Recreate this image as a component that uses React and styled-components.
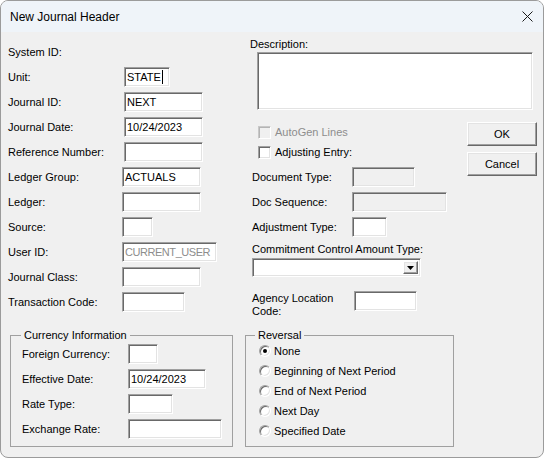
import React from "react";
import styled, { createGlobalStyle } from "styled-components";

const GlobalStyle = createGlobalStyle`
  html, body {
    margin: 0;
    padding: 0;
    background: #ffffff;
  }
  body {
    font-family: "Liberation Sans", Arial, sans-serif;
    font-size: 11px;
    color: #000;
  }
`;

const Window = styled.div`
  width: 544px;
  height: 458px;
  box-sizing: border-box;
  border: 1px solid #9b9b9b;
  border-radius: 8px;
  background: #f0f0f0;
  overflow: hidden;
  display: flex;
  flex-direction: column;
`;

const TitleBar = styled.div`
  height: 31px;
  flex: none;
  display: flex;
  align-items: center;
  justify-content: space-between;
  padding: 0 10px 0 9px;
  background: #eff4f9;
  font-size: 12px;
`;

const Body = styled.div`
  padding: 5px 6px 0 7px;
`;

const Top = styled.div`
  display: flex;
`;

const LeftCol = styled.div`
  width: 242px;
  padding-top: 2px;
`;

const Row = styled.div`
  height: ${(p) => p.$h || 25}px;
  display: flex;
  align-items: center;
`;

const Label = styled.span`
  width: ${(p) => p.$w}px;
  flex: none;
  white-space: nowrap;
  color: ${(p) => (p.$disabled ? "#8d8d8d" : "#000")};
`;

const sunken = `
  box-sizing: border-box;
  border: 1px solid;
  border-color: #a0a0a0 #ffffff #ffffff #a0a0a0;
  box-shadow: inset 1px 1px 0 #696969, inset -1px -1px 0 #e3e3e3;
`;

const raised = `
  box-sizing: border-box;
  border: 1px solid;
  border-color: #ffffff #696969 #696969 #ffffff;
  box-shadow: inset -1px -1px 0 #a0a0a0, inset 1px 1px 0 #e3e3e3;
`;

const Field = styled.div`
  ${sunken}
  flex: none;
  width: ${(p) => p.$w}px;
  height: ${(p) => p.$h || 20}px;
  margin-left: ${(p) => p.$ml || 0}px;
  padding: 0 2px;
  display: flex;
  align-items: center;
  overflow: hidden;
  white-space: nowrap;
  background: ${(p) => (p.$disabled ? "#f0f0f0" : "#ffffff")};
  color: ${(p) => (p.$gray ? "#8d8d8d" : "#000")};
  letter-spacing: ${(p) => (p.$gray ? "-0.45px" : "normal")};
`;

const Caret = styled.span`
  display: inline-block;
  width: 1px;
  height: 14px;
  background: #000;
  margin-left: 1px;
`;

const RightCol = styled.div`
  flex: 1;
  display: flex;
  flex-direction: column;
`;

const DescLabel = styled.div`
  line-height: 14px;
`;

const TextArea = styled.div`
  ${sunken}
  width: 276px;
  height: 58px;
  margin: 1px 0 0 7px;
  background: #ffffff;
`;

const Lower = styled.div`
  display: flex;
`;

const FieldsCol = styled.div`
  flex: 1;
  display: flex;
  flex-direction: column;
  padding-top: 12px;
`;

const CheckRow = styled.label`
  height: 20px;
  display: flex;
  align-items: center;
  gap: 4px;
  padding-left: 8px;
  color: ${(p) => (p.$disabled ? "#8d8d8d" : "#000")};
`;

const CheckBox = styled.span`
  ${sunken}
  width: 13px;
  height: 13px;
  background: ${(p) => (p.$disabled ? "#f0f0f0" : "#ffffff")};
  ${(p) =>
    p.$disabled &&
    `border-color: #c8c8c8 #ffffff #ffffff #c8c8c8; box-shadow: inset 1px 1px 0 #b4b4b4;`}
`;

const RightFields = styled.div`
  margin-top: 2px;
  padding-left: 2px;
`;

const CommitLabel = styled.div`
  line-height: 14px;
  margin: 3px 0 0 2px;
`;

const Select = styled.div`
  ${sunken}
  width: 169px;
  height: 19px;
  margin: 2px 0 0 2px;
  background: #ffffff;
  display: flex;
  justify-content: flex-end;
  padding: 2px;
`;

const DropButton = styled.span`
  ${raised}
  width: 15px;
  height: 100%;
  background: #f0f0f0;
  display: flex;
  align-items: center;
  justify-content: center;
`;

const AgencyRow = styled.div`
  display: flex;
  align-items: flex-start;
  margin: 14px 0 0 2px;
`;

const TwoLineLabel = styled.span`
  width: 102px;
  line-height: 13px;
  padding-top: 1px;
`;

const ButtonCol = styled.div`
  width: 70px;
  display: flex;
  flex-direction: column;
  gap: 6px;
  padding-top: 12px;
`;

const Button = styled.button`
  ${raised}
  width: 70px;
  height: 24px;
  background: #f0f0f0;
  font-family: "Liberation Sans", Arial, sans-serif;
  font-size: 11px;
  color: #000;
  padding: 0;
`;

const Groups = styled.div`
  display: flex;
  gap: 12px;
  margin: 11px 0 0 2px;
`;

const GroupBox = styled.fieldset`
  width: ${(p) => p.$w}px;
  box-sizing: border-box;
  margin: 0;
  padding: 0 0 5px ${(p) => p.$pl}px;
  border: 1px solid #a0a0a0;
  min-width: 0;
`;

const Legend = styled.legend`
  margin-left: ${(p) => p.$ml}px;
  padding: 0 3px;
  line-height: 12px;
  font-size: 11px;
`;

const RadioRow = styled.label`
  height: 20px;
  display: flex;
  align-items: center;
  gap: 3px;
`;

const Radio = styled.span`
  position: relative;
  box-sizing: border-box;
  width: 12px;
  height: 12px;
  border-radius: 50%;
  border: 1px solid;
  border-color: #a0a0a0 #ffffff #ffffff #a0a0a0;
  box-shadow: inset 1px 1px 0 #696969, inset -1px -1px 0 #e3e3e3;
  background: #ffffff;
  &::after {
    content: "";
    display: ${(p) => (p.$checked ? "block" : "none")};
    position: absolute;
    left: 3px;
    top: 3px;
    width: 4px;
    height: 4px;
    border-radius: 50%;
    background: #000;
  }
`;

const CloseIcon = () => (
  <svg width="11" height="11" viewBox="0 0 11 11">
    <path d="M0.5 0.5 L10.5 10.5 M10.5 0.5 L0.5 10.5" stroke="#1a1a1a" strokeWidth="1" />
  </svg>
);

const leftFields = [
  { label: "Unit:", w: 46, ml: 2, value: "STATE", caret: true },
  { label: "Journal ID:", w: 79, ml: 2, value: "NEXT" },
  { label: "Journal Date:", w: 79, ml: 2, value: "10/24/2023" },
  { label: "Reference Number:", w: 79, ml: 2 },
  { label: "Ledger Group:", w: 79, value: "ACTUALS" },
  { label: "Ledger:", w: 79 },
  { label: "Source:", w: 31 },
  { label: "User ID:", w: 95, value: "CURRENT_USER", gray: true },
  { label: "Journal Class:", w: 79 },
  { label: "Transaction Code:", w: 63 },
];

const currencyFields = [
  { label: "Foreign Currency:", w: 30 },
  { label: "Effective Date:", w: 78, value: "10/24/2023" },
  { label: "Rate Type:", w: 45 },
  { label: "Exchange Rate:", w: 94 },
];

const reversalOptions = [
  "None",
  "Beginning of Next Period",
  "End of Next Period",
  "Next Day",
  "Specified Date",
];

const App = () => {
  return (
    <>
      <GlobalStyle />
      <Window>
        <TitleBar>
          <span>New Journal Header</span>
          <CloseIcon />
        </TitleBar>
        <Body>
          <Top>
            <LeftCol>
              <Row>
                <Label $w={114}>System ID:</Label>
              </Row>
              {leftFields.map((f) => (
                <Row key={f.label}>
                  <Label $w={114}>{f.label}</Label>
                  <Field $w={f.w} $ml={f.ml} $gray={f.gray}>
                    {f.value}
                    {f.caret && <Caret />}
                  </Field>
                </Row>
              ))}
            </LeftCol>
            <RightCol>
              <DescLabel>Description:</DescLabel>
              <TextArea />
              <Lower>
                <FieldsCol>
                  <CheckRow $disabled>
                    <CheckBox $disabled />
                    AutoGen Lines
                  </CheckRow>
                  <CheckRow>
                    <CheckBox />
                    Adjusting Entry:
                  </CheckRow>
                  <RightFields>
                    <Row>
                      <Label $w={100}>Document Type:</Label>
                      <Field $w={63} $disabled />
                    </Row>
                    <Row>
                      <Label $w={100}>Doc Sequence:</Label>
                      <Field $w={95} $disabled />
                    </Row>
                    <Row>
                      <Label $w={100}>Adjustment Type:</Label>
                      <Field $w={35} />
                    </Row>
                  </RightFields>
                  <CommitLabel>Commitment Control Amount Type:</CommitLabel>
                  <Select>
                    <DropButton>
                      <svg width="7" height="4" viewBox="0 0 7 4">
                        <path d="M0 0 H7 L3.5 4 Z" fill="#000" />
                      </svg>
                    </DropButton>
                  </Select>
                  <AgencyRow>
                    <TwoLineLabel>
                      Agency Location
                      <br />
                      Code:
                    </TwoLineLabel>
                    <Field $w={63} />
                  </AgencyRow>
                </FieldsCol>
                <ButtonCol>
                  <Button>OK</Button>
                  <Button>Cancel</Button>
                </ButtonCol>
              </Lower>
            </RightCol>
          </Top>
          <Groups>
            <GroupBox $w={223} $pl={11}>
              <Legend $ml={-1}>Currency Information</Legend>
              {currencyFields.map((f) => (
                <Row key={f.label}>
                  <Label $w={106}>{f.label}</Label>
                  <Field $w={f.w}>{f.value}</Field>
                </Row>
              ))}
            </GroupBox>
            <GroupBox $w={209} $pl={13}>
              <Legend $ml={-4}>Reversal</Legend>
              {reversalOptions.map((o, i) => (
                <RadioRow key={o}>
                  <Radio $checked={i === 0} />
                  {o}
                </RadioRow>
              ))}
            </GroupBox>
          </Groups>
        </Body>
      </Window>
    </>
  );
};

export default App;
